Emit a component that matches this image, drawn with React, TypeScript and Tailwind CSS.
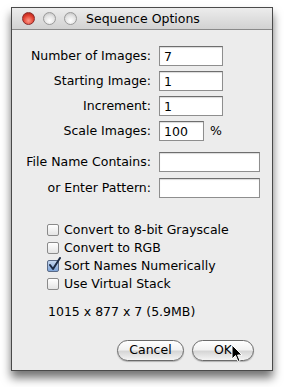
import React from "react";

const font = { fontFamily: '"DejaVu Sans", "Liberation Sans", sans-serif' };

function Light({ red }: { red?: boolean }) {
  return (
    <div
      className={
        red
          ? "w-[13px] h-[13px] rounded-full border border-[#8a2a2a] bg-[radial-gradient(circle_at_50%_70%,#ff9a8a_0%,#e04030_55%,#a01c12_100%)]"
          : "w-[13px] h-[13px] rounded-full border border-[#9a9a9a] bg-[radial-gradient(circle_at_50%_70%,#ffffff_0%,#e2e2e2_55%,#b8b8b8_100%)]"
      }
    />
  );
}

function Field({ label, value, w, suffix }: { label: string; value?: string; w: string; suffix?: string }) {
  return (
    <div className="flex items-center h-[20px]">
      <div className="w-[140px] text-right pr-[1px] whitespace-nowrap">{label}</div>
      <div
        className={`ml-[7px] h-[20px] ${w} bg-white border border-[#8e8e8e] border-t-[#6e6e6e] shadow-[inset_0_1px_1px_rgba(0,0,0,0.15)] pl-[4px] leading-[19px]`}
      >
        {value}
      </div>
      {suffix && <div className="ml-[6px]">{suffix}</div>}
    </div>
  );
}

function Check({ label, checked }: { label: string; checked?: boolean }) {
  return (
    <div className="flex items-center h-[18px]">
      <div
        className={
          checked
            ? "relative w-[12px] h-[12px] rounded-[2px] border border-[#5a6a86] bg-[linear-gradient(#c6d8f0,#7ea4d8)]"
            : "w-[12px] h-[12px] rounded-[2px] border border-[#8a8a8a] bg-[linear-gradient(#ffffff,#e4e4e4)]"
        }
      >
        {checked && (
          <svg className="absolute left-[0px] top-[-4px]" width="14" height="14" viewBox="0 0 14 14">
            <path d="M2 8 L5 12 L12 1" fill="none" stroke="#1c2a44" strokeWidth="2" strokeLinecap="round" strokeLinejoin="round" />
          </svg>
        )}
      </div>
      <div className="ml-[5px]">{label}</div>
    </div>
  );
}

function Btn({ label, w }: { label: string; w: string }) {
  return (
    <div
      className={`${w} h-[21px] rounded-full border border-[#6a6a6a] bg-[linear-gradient(#ffffff_0%,#f2f2f2_45%,#d6d6d6_55%,#f4f4f4_100%)] shadow-[0_1px_1px_rgba(0,0,0,0.25)] flex items-center justify-center leading-none`}
    >
      {label}
    </div>
  );
}

export default function App() {
  return (
    <div className="w-[284px] h-[387px] bg-white pt-[7px] pl-[11px] text-[12.5px] text-black" style={font}>
      <div className="relative w-[262px] h-[364px] border border-[#4a4a4a] bg-[#ececec] shadow-[0_7px_9px_rgba(0,0,0,0.55)] flex flex-col">
        {/* Title bar */}
        <div className="h-[22px] flex items-center border-b border-[#8a8a8a] bg-[linear-gradient(#ececec,#d2d2d2)]">
          <div className="flex gap-[8px] pl-[10px]">
            <Light red />
            <Light />
            <Light />
          </div>
          <div className="ml-[9px] text-[12.5px] mt-[1px]">Sequence Options</div>
        </div>

        {/* Body */}
        <div className="flex flex-col pt-[16px]">
          <div className="flex flex-col gap-[5px]">
            <Field label="Number of Images:" value="7" w="w-[64px]" />
            <Field label="Starting Image:" value="1" w="w-[64px]" />
            <Field label="Increment:" value="1" w="w-[64px]" />
            <Field label="Scale Images:" value="100" w="w-[45px]" suffix="%" />
          </div>
          <div className="flex flex-col gap-[6px] mt-[11px]">
            <Field label="File Name Contains:" w="w-[101px]" />
            <Field label="or Enter Pattern:" w="w-[101px]" />
          </div>
          <div className="flex flex-col pl-[35px] mt-[23px]">
            <Check label="Convert to 8-bit Grayscale" />
            <Check label="Convert to RGB" />
            <Check label="Sort Names Numerically" checked />
            <Check label="Use Virtual Stack" />
          </div>
          <div className="pl-[36px] mt-[10px]">1015 x 877 x 7 (5.9MB)</div>
          <div className="flex justify-end gap-[8px] pr-[18px] mt-[18px]">
            <Btn label="Cancel" w="w-[67px]" />
            <Btn label="OK" w="w-[62px]" />
          </div>
        </div>

        {/* cursor */}
        <svg className="absolute left-[219px] top-[336px]" width="12" height="19" viewBox="0 0 12 19">
          <path d="M1 1 L1 15 L4.5 11.5 L7 17.5 L9 16.6 L6.6 11 L11 11 Z" fill="#000" stroke="#fff" strokeWidth="1" strokeLinejoin="round" />
        </svg>
      </div>
    </div>
  );
}
